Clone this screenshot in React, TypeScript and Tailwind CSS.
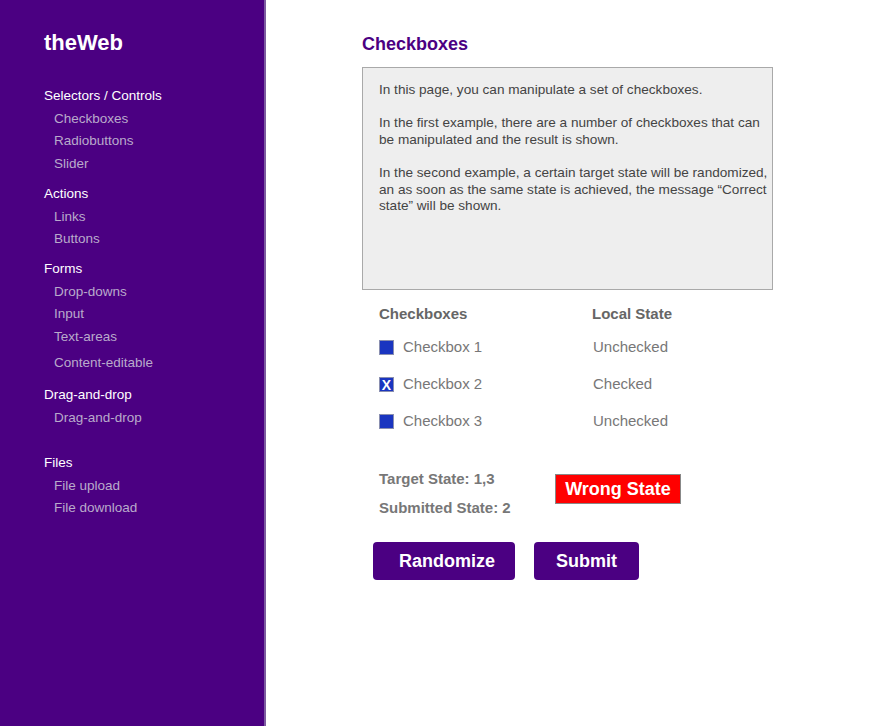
const nav = [
  { title: "Selectors / Controls", mt: "mt-[28px]", items: ["Checkboxes", "Radiobuttons", "Slider"] },
  { title: "Actions", mt: "mt-[7px]", items: ["Links", "Buttons"] },
  { title: "Forms", mt: "mt-[7px]", items: ["Drop-downs", "Input", "Text-areas", "Content-editable"] },
  { title: "Drag-and-drop", mt: "mt-[10px]", items: ["Drag-and-drop"] },
  { title: "Files", mt: "mt-[22px]", items: ["File upload", "File download"] },
];

const rows = [
  { label: "Checkbox 1", checked: false, state: "Unchecked" },
  { label: "Checkbox 2", checked: true, state: "Checked" },
  { label: "Checkbox 3", checked: false, state: "Unchecked" },
];

function Box({ checked }: { checked: boolean }) {
  return (
    <span className="w-[15px] h-[15px] bg-[#1a35c0] border border-[#8a8fb0] flex items-center justify-center text-white font-bold text-[14px] leading-none">
      {checked ? "X" : null}
    </span>
  );
}

export default function App() {
  return (
    <div className="flex min-h-screen font-['Liberation_Sans',Arial,sans-serif] bg-white">
      <aside className="w-[266px] shrink-0 min-h-[726px] bg-[#4b0082] border-r-2 border-[#7d5ba0] pl-[44px] pt-[28px]">
        <div className="text-white font-bold text-[22px] leading-[29px]">theWeb</div>
        {nav.map((g) => (
          <div key={g.title} className={g.mt}>
            <div className="text-white text-[13.5px] leading-[22.7px]">{g.title}</div>
            {g.items.map((it) => (
              <div
                key={it}
                className={`pl-[10px] text-[#b9aacb] text-[13.5px] leading-[22.7px] ${it === "Content-editable" ? "mt-[3px]" : ""}`}
              >
                {it}
              </div>
            ))}
          </div>
        ))}
      </aside>

      <main className="flex-1 pl-[96px] pt-[32px]">
        <h1 className="text-[#4b0082] font-bold text-[18px] leading-[24px]">Checkboxes</h1>
        <div className="mt-[11px] w-[411px] h-[223px] bg-[#eeeeee] border border-[#a9a9a9] pl-[16px] pt-[14px] text-[13.6px] leading-[16.6px] text-[#444]">
          <p>In this page, you can manipulate a set of checkboxes.</p>
          <p className="mt-[16.6px]">
            In the first example, there are a number of checkboxes that can
            <br />
            be manipulated and the result is shown.
          </p>
          <p className="mt-[16.6px]">
            In the second example, a certain target state will be randomized,
            <br />
            an as soon as the same state is achieved, the message “Correct
            <br />
            state” will be shown.
          </p>
        </div>

        <div className="pl-[17px] mt-[14px]">
          <div className="flex h-[20px] items-center font-bold text-[15px] text-[#666]">
            <span className="w-[213px]">Checkboxes</span>
            <span>Local State</span>
          </div>
          <div className="mt-[5px]">
            {rows.map((r) => (
              <div key={r.label} className="flex h-[37px] items-center text-[15px] text-[#777]">
                <span className="w-[214px] flex items-center gap-[9px]">
                  <Box checked={r.checked} />
                  {r.label}
                </span>
                <span>{r.state}</span>
              </div>
            ))}
          </div>

          <div className="mt-[29px] flex items-start">
            <div className="w-[176px] font-bold text-[15px] text-[#777] leading-[20px]">
              <div>Target State: 1,3</div>
              <div className="mt-[9px]">Submitted State: 2</div>
            </div>
            <div className="mt-[5px] w-[126px] h-[30px] bg-[#ff0000] border border-[#888] text-white font-bold text-[18px] flex items-center justify-center">
              Wrong State
            </div>
          </div>
        </div>

        <div className="mt-[24px] pl-[11px] flex gap-[19px]">
          <button className="w-[142px] h-[38px] rounded-[4px] bg-[#4b0082] text-white font-bold text-[18px] pl-[6px]">
            Randomize
          </button>
          <button className="w-[105px] h-[38px] rounded-[4px] bg-[#4b0082] text-white font-bold text-[18px]">
            Submit
          </button>
        </div>
      </main>
    </div>
  );
}
